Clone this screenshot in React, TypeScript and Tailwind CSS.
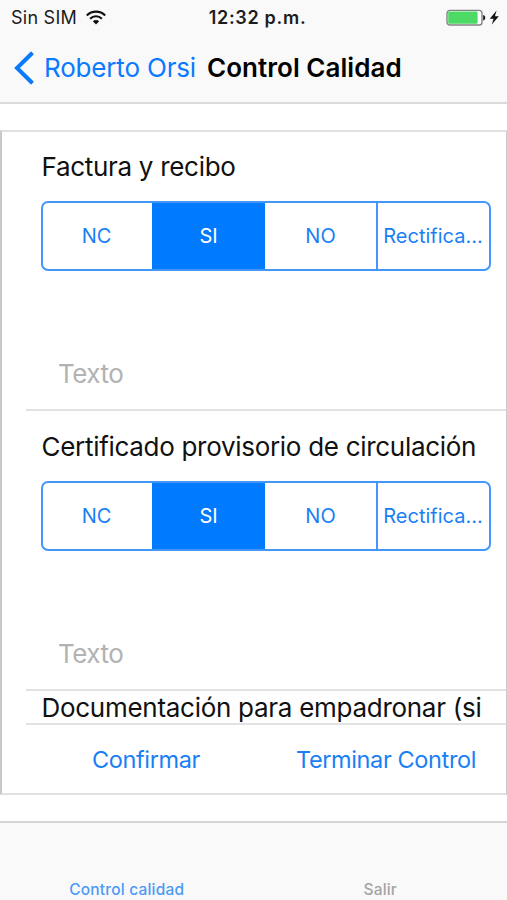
import React from 'react';

const OPTIONS = ['NC', 'SI', 'NO', 'Rectifica...'];

const StatusBar: React.FC = () => (
  <div className="grid h-[35px] grid-cols-[1fr_auto_1fr] items-center pl-[11px] pr-[7px] text-[18px] leading-none text-[#1c1c1c]">
    <div className="flex items-center gap-[9px]">
      <span className="tracking-[0.25px] whitespace-nowrap">Sin SIM</span>
      <svg className="-mt-px" width="20" height="15" viewBox="0 0 20 15" fill="none" stroke="#111" strokeWidth="2.1">
        <path d="M.8 5.4C6 .4 14 .4 19.2 5.4" />
        <path d="M4.1 8.8C7.4 5.4 12.6 5.4 15.9 8.8" />
        <path d="M6.8 11.2C8.6 9.5 11.4 9.5 13.2 11.2L10 14.6Z" fill="#111" stroke="none" />
      </svg>
    </div>
    <span className="pl-[4px] font-semibold tracking-[0.7px] whitespace-nowrap">12:32 p.m.</span>
    <div className="flex items-center justify-end">
      <svg width="54" height="18" viewBox="0 0 54 18" fill="none">
        <rect x="1" y="1.4" width="35" height="14.6" rx="2.8" fill="#fff" stroke="#808285" strokeWidth="1.4" />
        <rect x="2.2" y="2.6" width="29.4" height="12.2" rx="1.2" fill="#4cd964" />
        <path d="M37.2 6C39.9 6.4 39.9 11.2 37.2 11.6Z" fill="#111" />
        <path d="M50.6 1.4L43.8 9.8H47.6L45.8 15.6L52.8 7.2H48.9Z" fill="#111" />
      </svg>
    </div>
  </div>
);

const NavBar: React.FC = () => (
  <header className="h-[104px] shrink-0 border-b-2 border-[#dadada] bg-[#f9f9f9]">
    <StatusBar />
    <div className="flex h-[65px] items-center pl-[14px] text-[26px] leading-none whitespace-nowrap">
      <svg className="mr-[10px] shrink-0" width="20" height="34" viewBox="0 0 20 34" fill="none" stroke="#0a7aff" strokeWidth="4">
        <path d="M18.5 1.8L3 17L18.5 32.2" />
      </svg>
      <span className="w-[163px] tracking-[-0.18px] text-[#0a7aff]">Roberto Orsi</span>
      <h1 className="font-semibold tracking-[0.04px] text-black">Control Calidad</h1>
    </div>
  </header>
);

const SegmentedControl: React.FC<{ selected: string }> = ({ selected }) => (
  <div className="ml-[15px] grid h-[70px] w-[450px] grid-cols-[109px_113px_113px_1fr] overflow-hidden rounded-[7px] border-2 border-[#4596fb] text-[20px] leading-none">
    {OPTIONS.map((option) => (
      <button
        key={option}
        className={
          option === selected
            ? 'bg-[#007aff] text-white'
            : 'border-r-2 border-[#4596fb] text-[#1a7ff5] first:border-r-0 first:pr-[2px] last:border-r-0 last:pr-[1px]'
        }
      >
        {option}
      </button>
    ))}
  </div>
);

const ControlItem: React.FC<{ title: string }> = ({ title }) => (
  <section className="ml-[24px] border-b-2 border-[#e2e2e4] not-first:mt-px">
    <h2 className="h-[69px] pt-[18px] pl-[15.5px] text-[26px] leading-[34px] tracking-[-0.3px] whitespace-nowrap text-[#111]">
      {title}
    </h2>
    <SegmentedControl selected="SI" />
    <p className="h-[138px] pt-[85px] pl-[32px] text-[26px] leading-[36px] tracking-[-0.5px] text-[#b2b2b2]">Texto</p>
  </section>
);

export default function App() {
  return (
    <div className="flex h-[900px] w-[507px] flex-col overflow-hidden bg-white font-['Inter',sans-serif]">
      <NavBar />

      <main className="mt-[26px] h-[665px] shrink-0 border-y-2 border-r border-l-2 border-y-[#e0e0e0] border-r-[#cccccc] border-l-[#c8c8c8]">
        <ControlItem title="Factura y recibo" />
        <ControlItem title="Certificado provisorio de circulación" />
        <div className="ml-[24px] h-[34px] border-b-2 border-[#e2e2e4] pl-[15.5px] text-[26px] leading-[34px] tracking-[-0.28px] whitespace-nowrap text-[#111]">
          Documentación para empadronar (si
        </div>
        <div className="flex h-[69px] items-center justify-between pr-[30px] pl-[90px] text-[23.5px] leading-none tracking-[-0.38px] whitespace-nowrap text-[#1a7ff5]">
          <button>Confirmar</button>
          <button>Terminar Control</button>
        </div>
      </main>

      <nav className="mt-[26px] grid flex-1 grid-cols-2 items-end border-t-2 border-[#d4d4d4] bg-[#f9f9f9] pb-[2px] text-center text-[15.5px] leading-[16px] font-medium">
        <span className="tracking-[0.2px] text-[#4b9af5]">Control calidad</span>
        <span className="tracking-[0.2px] text-[#a3a3a3]">Salir</span>
      </nav>
    </div>
  );
}
